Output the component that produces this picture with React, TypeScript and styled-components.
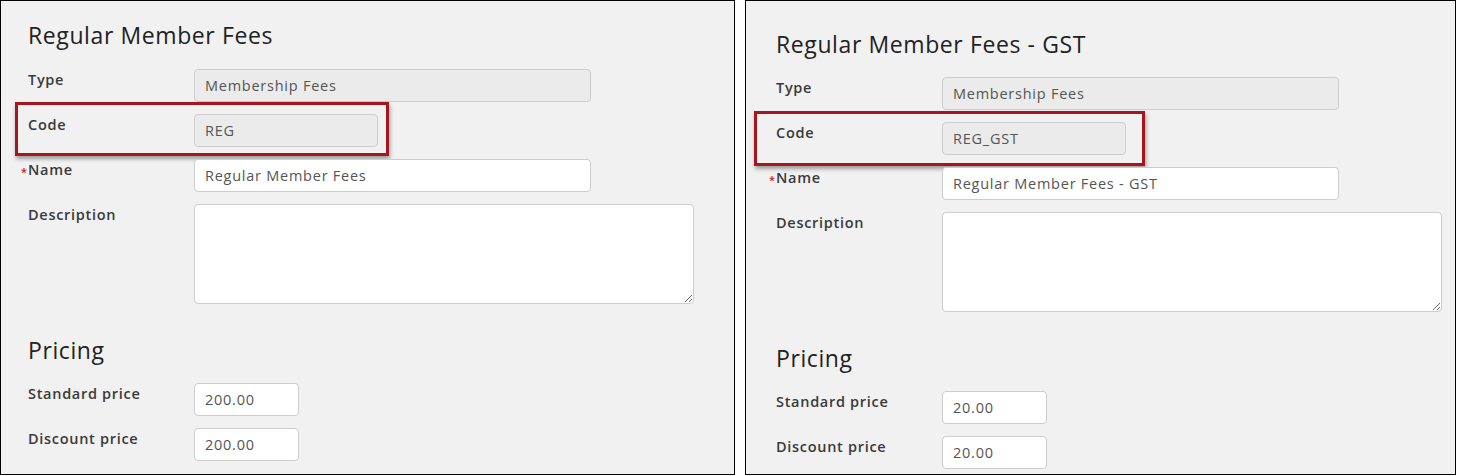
import React from "react";
import styled, { createGlobalStyle } from "styled-components";

const Global = createGlobalStyle`
  html, body { margin: 0; padding: 0; background: #ffffff; }
  body { font-family: "Open Sans", "Liberation Sans", sans-serif; }
  * { box-sizing: border-box; }
`;

const Page = styled.div`
  display: flex;
  gap: 10px;
  width: 1457px;
  height: 476px;
  align-items: flex-start;
`;

const Panel = styled.section<{ $w: number; $pt: number; $pl: number }>`
  width: ${(p) => p.$w}px;
  height: 475px;
  border: 1px solid #000;
  background: #f1f1f1;
  padding: ${(p) => p.$pt}px 0 0 ${(p) => p.$pl}px;
  overflow: hidden;
  display: flex;
  flex-direction: column;
`;

const Heading = styled.h2<{ $mt?: number }>`
  margin: ${(p) => p.$mt ?? 0}px 0 0 0;
  font-size: 23px;
  line-height: 28px;
  font-weight: 400;
  color: #222;
  letter-spacing: 0.6px;
`;

const Fields = styled.div<{ $mt: number }>`
  display: flex;
  flex-direction: column;
  gap: 12px;
  margin-top: ${(p) => p.$mt}px;
`;

const Row = styled.div`
  position: relative;
  display: grid;
  grid-template-columns: 166px auto;
  align-items: start;
`;

const Label = styled.label`
  padding-top: 1px;
  font-size: 14.5px;
  line-height: 20px;
  font-weight: 600;
  color: #3a3a3a;
  letter-spacing: 0.7px;
`;

const Req = styled.span`
  color: #d9141b;
  font-size: 11px;
  margin-left: -7px;
  margin-right: 1px;
  letter-spacing: 0;
  position: relative;
  top: 1px;
`;

const Input = styled.input<{ $w: number }>`
  width: ${(p) => p.$w}px;
  height: 33px;
  padding: 0 10px;
  border: 1px solid #cdcdcd;
  border-radius: 4px;
  background: #ffffff;
  font-family: inherit;
  font-size: 14.5px;
  color: #555;
  letter-spacing: 0.75px;
  outline: none;
  &:disabled {
    background: #ebebeb;
    color: #555;
  }
`;

const TextArea = styled.textarea`
  width: 500px;
  height: 100px;
  border: 1px solid #cdcdcd;
  border-radius: 4px;
  background: #fff;
  font-family: inherit;
  font-size: 14px;
  resize: both;
  outline: none;
`;

const Highlight = styled.div<{ $t: number; $r: number; $b: number; $l: number }>`
  position: absolute;
  top: ${(p) => p.$t}px;
  right: ${(p) => p.$r}px;
  bottom: ${(p) => p.$b}px;
  left: ${(p) => p.$l}px;
  border: 3px solid #a5161f;
  box-shadow: 1px 3px 4px rgba(0, 0, 0, 0.35);
  pointer-events: none;
`;

type Side = {
  title: string;
  code: string;
  name: string;
  price: string;
  w: number;
  pt: number;
  pl: number;
  fieldsTop: number;
  box: { t: number; r: number; b: number; l: number };
};

const sides: Side[] = [
  {
    title: "Regular Member Fees",
    code: "REG",
    name: "Regular Member Fees",
    price: "200.00",
    w: 735,
    pt: 20,
    pl: 27,
    fieldsTop: 20,
    box: { t: -12, r: -11, b: -9, l: -13 },
  },
  {
    title: "Regular Member Fees - GST",
    code: "REG_GST",
    name: "Regular Member Fees - GST",
    price: "20.00",
    w: 711,
    pt: 29,
    pl: 30,
    fieldsTop: 19,
    box: { t: -11, r: -19, b: -11, l: -22 },
  },
];

const CodeRow = styled(Row)`
  width: fit-content;
`;

function FeePanel({ s }: { s: Side }) {
  return (
    <Panel $w={s.w} $pt={s.pt} $pl={s.pl}>
      <Heading>{s.title}</Heading>
      <Fields $mt={s.fieldsTop}>
        <Row>
          <Label>Type</Label>
          <Input $w={397} disabled value="Membership Fees" readOnly />
        </Row>
        <CodeRow>
          <Label>Code</Label>
          <Input $w={184} disabled value={s.code} readOnly />
          <Highlight $t={s.box.t} $r={s.box.r} $b={s.box.b} $l={s.box.l} />
        </CodeRow>
        <Row>
          <Label>
            <Req>*</Req>Name
          </Label>
          <Input $w={397} value={s.name} readOnly />
        </Row>
        <Row>
          <Label>Description</Label>
          <TextArea readOnly />
        </Row>
      </Fields>
      <Heading $mt={32}>Pricing</Heading>
      <Fields $mt={19}>
        <Row>
          <Label>Standard price</Label>
          <Input $w={105} value={s.price} readOnly />
        </Row>
        <Row>
          <Label>Discount price</Label>
          <Input $w={105} value={s.price} readOnly />
        </Row>
      </Fields>
    </Panel>
  );
}

export default function App() {
  return (
    <>
      <Global />
      <Page>
        <FeePanel s={sides[0]} />
        <FeePanel s={sides[1]} />
      </Page>
    </>
  );
}
